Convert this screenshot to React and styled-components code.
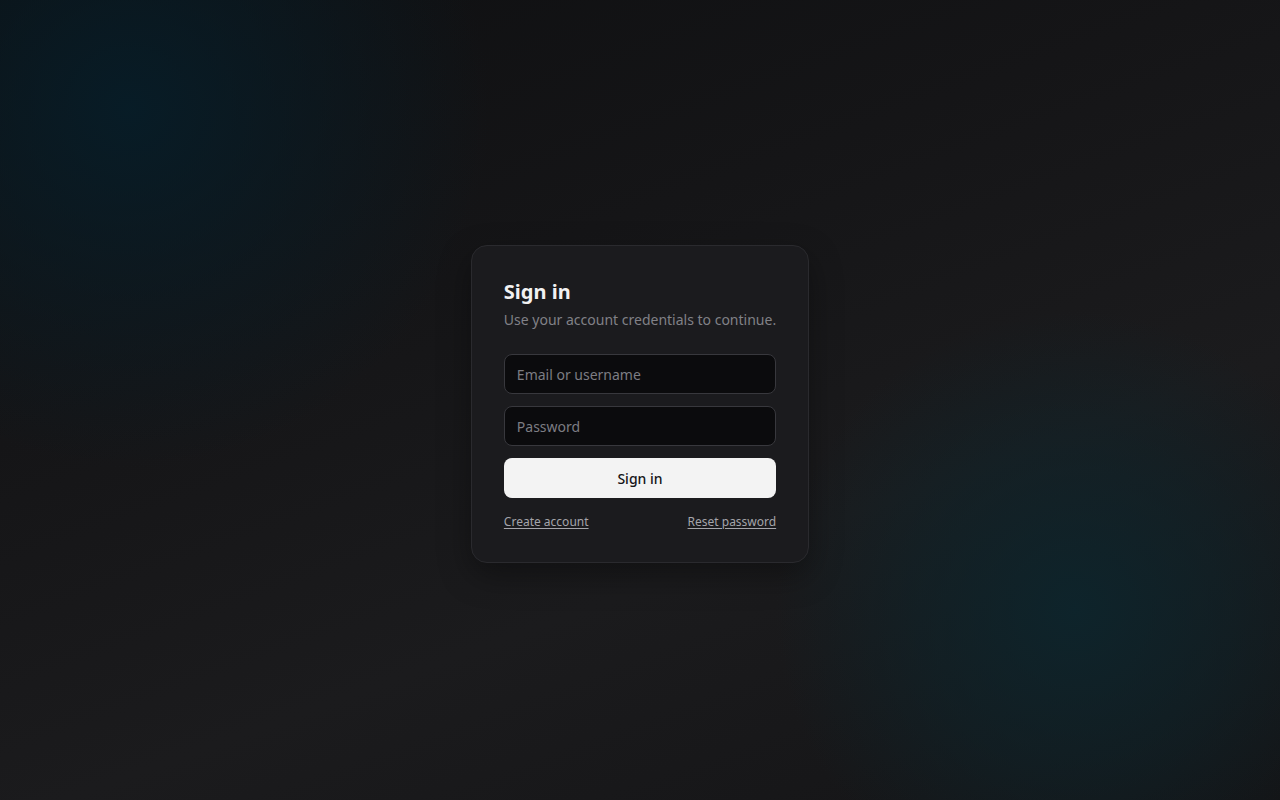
import React from "react";
import styled, { createGlobalStyle } from "styled-components";

const Global = createGlobalStyle`
  html, body { margin: 0; padding: 0; height: 100%; }
  body {
    font-family: "Noto Sans", "Open Sans", sans-serif;
    background: #151517;
  }
  * { box-sizing: border-box; }
`;

const Page = styled.main`
  min-height: 100vh;
  padding: 32px 24px 24px;
  display: flex;
  align-items: center;
  justify-content: center;
  background:
    radial-gradient(circle at 130px 110px, rgba(6, 30, 42, 0.85) 0, rgba(6, 30, 42, 0.45) 170px, rgba(6, 30, 42, 0) 360px),
    radial-gradient(circle at 1075px 610px, rgba(12, 38, 46, 0.85) 0, rgba(12, 38, 46, 0.45) 160px, rgba(12, 38, 46, 0) 300px),
    linear-gradient(160deg, #0e0f11 0%, #151517 35%, #1b1b1d 65%, #141416 100%);
`;

const Card = styled.section`
  min-width: 338px;
  padding: 32px;
  background: #1b1b1e;
  border: 1px solid #2a2a2e;
  border-radius: 16px;
  box-shadow: 0 12px 32px rgba(0, 0, 0, 0.35);
  display: flex;
  flex-direction: column;
`;

const Title = styled.h1`
  margin: 0;
  font-size: 20px;
  line-height: 28px;
  font-weight: 700;
  color: #f1f1f2;
`;

const Subtitle = styled.p`
  margin: 4px 0 0;
  font-size: 14px;
  line-height: 20px;
  color: #818187;
  white-space: nowrap;
`;

const Form = styled.form`
  margin-top: 24px;
  display: flex;
  flex-direction: column;
  gap: 12px;
`;

const Input = styled.input`
  height: 40px;
  width: 100%;
  padding: 0 12px;
  background: #0b0b0d;
  border: 1px solid #38383d;
  border-radius: 8px;
  color: #eee;
  font-family: inherit;
  font-size: 14px;
  outline: none;
  &::placeholder { color: #7d7d83; }
`;

const Button = styled.button`
  height: 40px;
  border: none;
  border-radius: 8px;
  background: #f3f3f3;
  color: #151517;
  font-family: inherit;
  font-size: 14px;
  font-weight: 500;
  cursor: pointer;
`;

const Links = styled.div`
  margin-top: 16px;
  display: flex;
  justify-content: space-between;
`;

const Link = styled.a`
  font-size: 12px;
  line-height: 16px;
  color: #a4a4aa;
  text-decoration: underline;
  text-underline-offset: 2px;
  cursor: pointer;
`;

export default function App() {
  return (
    <>
      <Global />
      <Page>
        <Card>
          <Title>Sign in</Title>
          <Subtitle>Use your account credentials to continue.</Subtitle>
          <Form onSubmit={(e) => e.preventDefault()}>
            <Input type="text" placeholder="Email or username" />
            <Input type="password" placeholder="Password" />
            <Button type="submit">Sign in</Button>
          </Form>
          <Links>
            <Link>Create account</Link>
            <Link>Reset password</Link>
          </Links>
        </Card>
      </Page>
    </>
  );
}
